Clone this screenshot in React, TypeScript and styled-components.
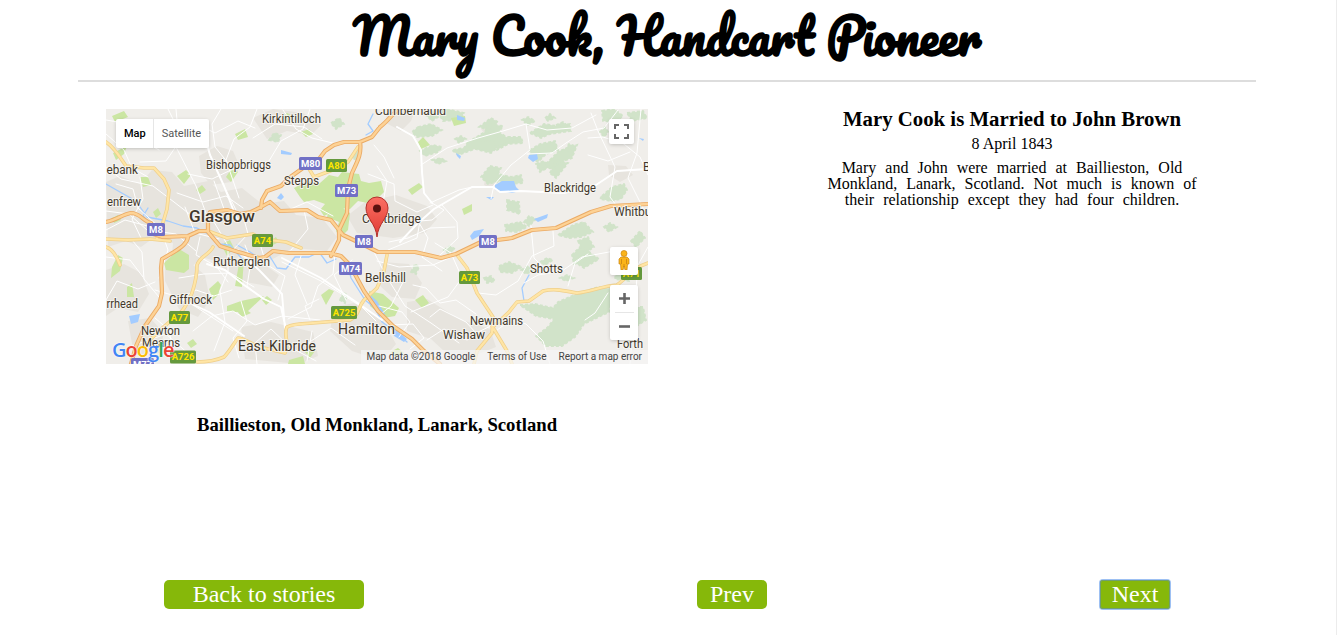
import React from "react";
import styled, { createGlobalStyle } from "styled-components";

const GlobalStyle = createGlobalStyle`
  *, *::before, *::after { box-sizing: border-box; }
  html, body { margin: 0; padding: 0; background: #fff; }
  body { font-family: "Liberation Serif", "Times New Roman", serif; color: #000; overflow: hidden; }
  h1, h2, h3, p { margin: 0; }
`;

const Page = styled.div`
  height: 635px;
  padding: 0 80px 0 78px;
  border-right: 1px solid #ececec;
  display: flex;
  flex-direction: column;
`;

const Header = styled.header`
  height: 82px;
  border-bottom: 2px solid #ddd;
  display: flex;
  justify-content: center;
  padding-top: 3px;
`;

const Title = styled.h1`
  font: 700 48px/66px Pacifico, cursive;
  white-space: nowrap;
`;

const Story = styled.main`
  display: flex;
  justify-content: space-between;
  height: 498px;
  padding: 27px 50px 0 28px;
`;

const Place = styled.section`
  width: 542px;
`;

const Details = styled.section`
  width: 388px;
  text-align: center;
`;

const EventTitle = styled.h2`
  font-size: 20.8px;
  line-height: 24px;
  margin-top: -2px;
  white-space: nowrap;
`;

const EventDate = styled.p`
  font-size: 16px;
  line-height: 18px;
  margin-top: 4px;
`;

const Description = styled.p`
  font-size: 16px;
  line-height: 16px;
  margin-top: 7px;
  word-spacing: 5px;
`;

const PlaceName = styled.h3`
  font-size: 18.72px;
  line-height: 20px;
  margin-top: 51px;
  text-align: center;
  white-space: nowrap;
`;

const Nav = styled.nav`
  display: flex;
  justify-content: space-between;
  padding: 0 86px;
`;

const NavButton = styled.button<{ $wide?: boolean; $active?: boolean }>`
  width: ${(p) => (p.$wide ? 200 : 70)}px;
  height: 29px;
  padding: 0 0 1px;
  border: 0;
  border-radius: ${(p) => (p.$active ? 3 : 5)}px;
  background: #86b80a;
  color: #fff;
  font: 24px/28px "Liberation Serif", "Times New Roman", serif;
  display: flex;
  align-items: center;
  justify-content: center;
  box-shadow: ${(p) => (p.$active ? "inset 0 0 0 1px #6f9f72, 0 0 0 1px #9dc0f3" : "none")};
`;

const MapFrame = styled.div`
  position: relative;
  width: 542px;
  height: 255px;
  overflow: hidden;
  background: #f0eeea;
  font-family: Roboto, sans-serif;
`;

const MapCanvas = styled.svg`
  display: block;
  font-family: Roboto, sans-serif;
`;

const Control = styled.div`
  position: absolute;
  background: #fff;
  border-radius: 2px;
  box-shadow: 0 1px 4px -1px rgba(0, 0, 0, 0.3);
  display: flex;
  align-items: center;
  justify-content: center;
`;

const TypeControl = styled(Control)`
  left: 10px;
  top: 10px;
  height: 29px;
`;

const TypeOption = styled.span<{ $on?: boolean }>`
  font-size: 11px;
  line-height: 29px;
  padding: 0 ${(p) => (p.$on ? 7 : 8)}px 0 8px;
  color: ${(p) => (p.$on ? "#000" : "#565656")};
  font-weight: ${(p) => (p.$on ? 500 : 400)};
  & + & { border-left: 1px solid #e6e6e6; }
`;

const FullScreen = styled(Control)`
  left: 503px;
  top: 10px;
  width: 25px;
  height: 25px;
`;

const Pegman = styled(Control)`
  left: 504px;
  top: 138px;
  width: 28px;
  height: 28px;
  padding-bottom: 2px;
`;

const Zoom = styled(Control)`
  left: 504px;
  top: 176px;
  width: 28px;
  height: 55px;
  flex-direction: column;
`;

const ZoomStep = styled.div`
  width: 19px;
  flex: 1;
  display: flex;
  align-items: center;
  justify-content: center;
  & + & { border-top: 1px solid #e6e6e6; }
`;

const Attribution = styled.div`
  position: absolute;
  right: 0;
  bottom: 0;
  height: 14px;
  padding: 0 6px 0 5px;
  display: flex;
  gap: 12px;
  font-size: 10px;
  line-height: 14px;
  color: #444;
  white-space: nowrap;
  background: rgba(245, 245, 245, 0.72);
`;

const Logo = styled.div`
  position: absolute;
  left: 6px;
  bottom: 2px;
  font: 600 20px/24px "Open Sans", sans-serif;
  letter-spacing: -0.95px;
  text-shadow: 0 0 1px #fff, 0 0 2px #fff;
`;

const Tint = styled.span<{ $c: string }>`
  color: ${(p) => p.$c};
`;

const urban = [
  "M106 182l14-6 20 8 12-14 20 2 12 14 24-5 13 11 21-4 20 16 22-3 12 14 26 3 15 19-10 14-34-3-22 12-25-9-18 14-26-8-17 16-14-8 2-22-21-4-11 8-15-6-18 6z",
  "M253 118l20-9 30 4 18 12-10 10-24-4-20 8z",
  "M199 156l18-10 16 5 7 16-9 15-20 3-10-12z",
  "M106 270l18-6 17 9 8 21-11 18-20-4-12 8z",
  "M165 257l22 3 18 15 5 25-12 17-19-8-14-28z",
  "M347 216l18-14 31-7 31 11 10 13-12 14-32 5-36-5z",
  "M382 262l27 2 13 19-7 16-23-2-16-15z",
  "M334 307l20-4 29 18 13 23-14 17-30-10-22-20z",
  "M241 327l30-5 42 10 5 24-19 8-54-5z",
  "M407 302l20-3 32 20 31 10 6 18-20 8-31-3-14-13-24-8z",
  "M387 109l29 0-5 12-10 10-15-8z",
  "M481 129l9-4 9 3 1 9-11 3z",
  "M608 165l18 1 7 9-13 7-11-7z",
  "M485 179l8-2 3 6-6 5-6-3z",
  "M128 321l22-3 14 15-5 20-25 2z",
  "M214 249l25 11 22 2 18 13-7 12-26-5-31-19z",
];

const woods = [
  "M418 127l13-3 11 6-10 6-15 1-5-5z",
  "M437 111l10-2 17 4-4 7-17 1z",
  "M468 142l17-10 3-8 15 2-4 6 13 9-11 3-10 9-16-4-17 6-6-5 12-2z",
  "M479 127l12-9 7 4-9 8z",
  "M530 150l10-6 15-3 3 9-12 4-8 8-7-4z",
  "M550 160l9-9 18-6-5 13-14 5-4 6-12-2z",
  "M530 133l14-9 13 2 13-2 1 7-21 3-9 4z",
  "M550 173l6-13 12 3-12 15z",
  "M602 196l10-9 12-3 3 6-6 9-10 2-11-2z",
  "M507 200l12 2 1 12-13-4z",
  "M490 166l11 2-3 6 13 3 10-2 2 8-14 1-8-3-13 3-7-7z",
  "M488 133l8-2 2 7-9 4-9-2z",
  "M520 305l15-1 18 4 5-6 16-7 24-8 15 2-4 23-25 12-9 13-13 9-16 0-10-10 12-9 6-8-18-3z",
  "M578 241l10-4 6 10-6 4 11 8-15 9-9-6 9-8z",
  "M572 255l8-8 8 3-3 11-11 3z",
  "M616 271l11-4 9 4-7 4 0 6-14-2z",
  "M505 225l15-3 7 5-10 5-11-1z",
  "M558 235l15-10 11-3 9 10-12 5-12 1z",
  "M499 266l10-4 13 5-10 6-12-1z",
  "M625 307l18 0 3 13-17 11-8-7z",
  "M631 241l9-10 5 7-9 9z",
  "M427 116l7-5 4 6-6 4z",
  "M420 151l13-6 9 2-4 5-13 4z",
  "M494 143l14-6 13 0 2 6-15 1-11 6z",
  "M602 111l12-2 9 7-8 6-12-1z",
  "M627 113l16-2 4 7-15 3z",
  "M524 222l5-6 7 3-7 7z",
  "M536 164l8-3 5 6-9 5z",
];

const scrub = "M432 160l9-2 5 3-8 3zM455 139l6-3 5 3-7 4zM556 125l7-3 5 4-9 3zM545 118l5-4 5 4-7 3zM565 150l4-6 6 2-4 5zM521 270l7-4 6 4-8 4zM484 278l7-2 4 5-8 2zM604 227l6-4 7 4-8 5zM614 255l5-5 5 5-6 4zM540 262l7-4 6 2-8 5zM560 278l7-3 7 3-8 3zM411 272l4-8 4 3-3 7zM444 250l6-4 5 3-7 4zM600 132l5-5 3 5-4 5zM522 120l6-3 7 4-7 4zM590 308l9-3 8 4-9 6zM340 300l3-8 4 3-2 8zM269 140l5-7 7 2-3 7zM331 123l8-5 5 6-8 5zM352 158l3-9 5 2-3 9z";

const parks = [
  "M294 188l13-7 13 2 9-8 9 2 4-5 17 2 2 7 8 2 12-2 3 11-12 12-14-3-8 8-10-1-16 8-4-6 5-6-11-4-10 2-4-5z",
  "M329 210l12-3 9 6-2 17-8 8-4-7 3-9-12-5z",
  "M164 263l15-14 10 6 0 14-5 4-18-3z",
  "M227 306l14-5 23-5-16 15-13 1-8-1z",
  "M209 289l9-8 3 4-3 10-5 5z",
  "M369 291l14 3 16 14-4 8-11 2-14-12z",
  "M418 142l5-5 7 8-9 4z",
  "M408 190l11-7 4 4-11 8z",
  "M462 209l10-5 0 7-8 4z",
  "M451 118l14-2 1 7-12 3z",
  "M177 176l9-6 5 5-7 9z",
  "M235 134l10-5 3 8-10 3z",
  "M112 267l6-12 5 3-3 13-9 7z",
  "M224 243l6-3 4 8-7 8-4-8z",
  "M240 258l4 0-2 29-7-1z",
  "M289 360l14-4 2 8-17 0z",
  "M127 287l5-4 2 14-7 0z",
  "M415 300l8-5 6 8-7 5z",
  "M112 116l12-5 4 6-13 5z",
  "M140 177l8 0 3 8-8 2z",
  "M226 177l6-9 6 4-7 10z",
  "M305 352l5-8 5 7-5 7z",
  "M113 153l14-7-3 8-8 6z",
  "M321 295l8-6 5 2-8 14z",
  "M196 190l6-5 4 5-6 4zM155 137l5-4 5 4-6 5zM270 241l6-4 3 5-6 3zM153 212l5-4 3 6-5 4zM112 218l6-3 3 5-7 3zM262 300l5-4 5 4-6 5zM187 343l6-4 4 5-6 4zM390 352l8-4 6 5-8 4zM281 118l6-5 6 3-5 6zM237 311l8-2 6 4-9 4zM301 132l8-3 4 5-7 3z",
];

const lakes = [
  "M495 185l7-4 12 0 2 6 4 4-8 2-17-3z",
  "M529 155l8-1 1 5-5 3-5-4z",
  "M470 236l4-5 10-2-5 7-7 4z",
  "M457 115l8 3-1 3-7-1z",
  "M534 219l14-5-1 4-9 4z",
  "M370 295l7 6 8 13-6 2-10-14z",
  "M281 150l11 3-1 2-10-1z",
  "M277 198l4-5 3 4-3 3z",
  "M129 316l11-2-2 8-7 2z",
  "M486 197l8 0-3 3z",
  "M456 153l5 3-1 3-3-3z",
  "M639 138l5 1-1 2z",
  "M392 327l7 5 8 7-3 3-10-6z",
  "M352 307l4 0-1 3z",
];

const rivers = [
  "M106 184l14 8 16 9 11 16 21 4 15 5 14 2 13 7 10 9 10 1 13 15",
  "M237 245l13 7 12 8 7-5 8 13 9 1 9-12 14 0 10-5 8 11 9-4",
  "M347 262l4 16 14 22 10 8 7 14 13 9 12 11",
  "M373 114l-5 10 5 7-7 4",
  "M524 301l-2-13 7-13",
  "M148 208l-5 8 10 10",
];

const streets = [
  "M168 109l9 18-2 18 21 41 11 30M106 167l15 12 32 7 21 16 22 17M205 137l5 18 14 31 12 24",
  "M106 120l18 3 14 15 21 12M257 109l-7 18-16 12-8 21 13 38M253 138l22-14 29 3 18 12",
  "M283 110l13 19 16 9 29 7M255 128l-17-7-23 12-14-7-29 16-36-5",
  "M116 184l17 5 5 19 20 18M140 177l3 22-11 20 9 19M177 193l26 9 23-6 17 12",
  "M188 174l24 5 19-9 25-6M214 181l10 28-10 13 13 22",
  "M106 211l23 3 18 16 29 4 20 17M106 230l19-10 30 8M185 207l10 26 24 6",
  "M132 240l10 12 2 27 15 18M106 300l11-19 21 8 17-7M155 290l27 8 25 16 26 17",
  "M207 264l18 6 19 15 20 14 17 8 5 22M228 249l0 22-8 20 5 31-11 29",
  "M179 278l25-4 26-1 24 14M245 245l6 16-4 25 16 13M282 262l39 19 41 26 14 14",
  "M336 243l-3 31-15 12-7 21-23 12M301 256l-6 19 12 29M352 260l-18 15 12 25",
  "M193 331l19-15 21-5 22 14 27-9 38 4M129 347l37-13 25 22M155 318l15 13 2 33",
  "M257 364l-2-21 16-14 19 18 26 14M312 331l-5 30M305 345l26-17 24 17",
  "M397 127l16 9 8 14 1 22 2 21 8 10 12 7-12 10-12 1-3 17-29 12",
  "M430 203l29-13 13-3 21 0 7 5 20-1 44 2 32-8 21-14 30-2",
  "M421 165l26-17 31-10 25-7 23-7 21 6 25-2 24-13M526 124l4 26-19 15-17 20-3 14",
  "M527 154l25-1 14-10 17-11 21-4 14-18M591 113l7 18 17 36-5 30 15 20",
  "M641 109l-4 44-9 25 17 34M588 138l15-1 21 7 16 13 8 18M630 152l-22 9-20-6",
  "M368 174l26 10 1 17 22 11 16-7M367 210l16-7 4-22-10-15M374 145l10 12 10 21",
  "M389 242l19-4 22-10 25-1M415 216l13 22-6 19 20 14M442 205l15 17 1 16-20 19",
  "M374 252l12 24 19 30 26 17 28 20M379 306l23 6 8 10-11 15M405 278l-14 28-10 8",
  "M456 255l-23 10-34 2-22-6M435 243l16 10 11 25-14 19-37 15",
  "M478 293l18 2 22-14 14-25 22-10-1-15M476 314l-20-14-16 3-14-15-13-3",
  "M430 317l10-8 26 13 10 11 17-8M391 325l22-1 11 14-14 11M427 340l17-11 23 11",
  "M648 247l-10 18-8 99M585 320l10-7 13-20M524 283l14-8 24-4 20-14 38-7",
  "M550 364l-7-23-17-17-15-4-18 13M568 286l7-23 13-9M531 226l3 32 14 14",
  "M310 109l-7 20-22 12-12 20-17 7M304 210l4 19-17 21M242 212l6 22-16 17M286 211l21-9 26 14",
  "M176 109l3 33-13 19-26 1M106 134l18 16 8 18 16 9M221 109l-9 15 3 23 14 17M151 138l26 9 27-7",
  "M161 230l7 20-9 28M106 257l24 3 13 17M200 237l-4 18 20 11 12 16M258 237l8 27 19 12-7 24",
  "M182 298l14-8 18 6 18-6M239 358l-6-20 14-17-6-20M310 320l-5-14 14-7",
];

const mainStreets = "M397 127l16 9 8 14 1 22 2 21 8 10M400 242l17-18 17-15 38-22 21 0 7 5 20-1 44 2 32-8 21-14 30-2M207 264l18 6 19 15 20 14 17 8 5 22M238 250l22 21 22 23 3 35M282 258l39 20 41 28 20 14M179 298l30 14 35 24M205 137l5 18 14 31 14 36";

const aRoads = [
  "M106 142c8 5 14 15 20 24l18 2 10 0 10 11 5 11-2 19-5 17-5 13",
  "M106 239l22 1 22-1 20 2",
  "M106 247c7 2 11 10 14 18",
  "M213 247c-4 8-13 9-16 18 0 11-2 19-5 28-4 8-6 15-12 20l-20 17-17 17",
  "M358 147l-10 15-10 6-24 9-6-10",
  "M208 231l19 7 26-4 8 5 25 3 15 6",
  "M197 362c12 0 18-1 27-5 6-6 10-14 14-19 7 0 14 7 22 9l25 6c5-10-2-19 2-26 8-4 17-3 26-4l37-3c9-4 8-13 14-20l13-12 7-17 3-16",
  "M457 255l10 13 10 25 16 24-1 16-15 18-3 13M492 326l15 25 5 13",
  "M493 327l16-15 8-10 12-1 14-10c12-3 22 0 34 2 13-1 25-7 40-8 10-7 15-17 31-22",
];

const motorways = [
  "M380 127c8-6 14-15 19-18M380 127l-8 10-12 5-16 0-10 3-9 6-9 12-13 5-14 10-8 8-14 5-5 9-1 8",
  "M106 222c11-2 17-8 25-9 9 0 12 8 20 10M150 233l13 4 25-1 11-5 9 0 0-13 2-6 17-2 13 4 11-2 10-5 9-5 10 9 27-1 11 7 13 3 12 15 17 8 18 9 37 0 26 6 15-4 25-12 31-4 20-8 24-2 35-16 20-6 37-2",
  "M360 142c2 12-3 20-8 31l-4 16-1 24-8 17 0 10-8 16",
  "M208 232l12 14 15 5 24 7 6-1 8-6 16 2 40 0 12 3 9 9 14 26 14 20 15 15 19 13 12 12 16 13",
  "M188 237c-1 7-8 11-14 15l-12 7-1 9 1 25-3 13-14 20-9 20-5 18",
];

interface Label { t: string; x: number; y: number; s: number; w?: number; }
const labels: Label[] = [
  { t: "Kirkintilloch", x: 262, y: 123, s: 12, w: 59 },
  { t: "Cumbernauld", x: 375, y: 115, s: 12, w: 71 },
  { t: "Bishopbriggs", x: 206, y: 169, s: 12, w: 65 },
  { t: "Stepps", x: 284, y: 184.5, s: 12, w: 35 },
  { t: "ebank", x: 106.5, y: 174, s: 12, w: 31.5 },
  { t: "enfrew", x: 107, y: 206, s: 12, w: 34 },
  { t: "Glasgow", x: 189, y: 222, s: 17, w: 66 },
  { t: "Coatbridge", x: 362, y: 223, s: 12, w: 59 },
  { t: "Blackridge", x: 544, y: 192, s: 12, w: 52 },
  { t: "Whitburn", x: 614, y: 216, s: 12 },
  { t: "B", x: 643, y: 171, s: 12 },
  { t: "Rutherglen", x: 213, y: 266, s: 12, w: 57 },
  { t: "Giffnock", x: 169, y: 304, s: 12, w: 43 },
  { t: "rrhead", x: 106.5, y: 308, s: 12, w: 31.5 },
  { t: "Newton", x: 141, y: 335, s: 12, w: 39 },
  { t: "Mearns", x: 142, y: 347, s: 12, w: 38 },
  { t: "East Kilbride", x: 238, y: 351, s: 14, w: 78 },
  { t: "Hamilton", x: 338, y: 334, s: 14, w: 57 },
  { t: "Bellshill", x: 365, y: 282, s: 12, w: 41 },
  { t: "Shotts", x: 530, y: 273, s: 12, w: 33 },
  { t: "Newmains", x: 470, y: 324.5, s: 12, w: 53 },
  { t: "Wishaw", x: 443, y: 338.5, s: 12, w: 42 },
  { t: "Forth", x: 617, y: 348, s: 12, w: 26 },
];

const shields: [string, number, number, number][] = [
  ["M80", 299, 157, 23], ["A80", 326, 159, 21], ["M73", 335, 184, 23],
  ["M8", 147, 223, 18], ["A74", 252, 234, 21], ["M8", 355, 235, 18],
  ["M8", 479, 235, 18], ["M74", 339, 262, 23], ["A73", 459, 271, 21],
  ["A77", 169, 311, 21], ["A725", 331, 306, 26], ["A726", 170, 350.5, 26],
  ["M77", 131, 358, 23], ["A71", 621, 267, 21],
];

const lineProps = { fill: "none", strokeLinejoin: "round" as const, strokeLinecap: "round" as const };

const RoadMap = () => (
  <MapCanvas width="542" height="255" viewBox="106 109 542 255">
    <path d={urban.join("")} fill="#e7e4de" />
    <path d={woods.join("") + scrub} fill="#d1e3c9" stroke="#d1e3c9" strokeWidth="1.8" strokeDasharray="3 2" />
    <path d={parks.join("")} fill="#cbe6a3" />
    <path d={lakes.join("")} fill="#a3ccff" />
    <path d={rivers.join("")} {...lineProps} stroke="#a3ccff" strokeWidth="1.3" />
    <path d={streets.join("")} {...lineProps} stroke="#fff" strokeWidth="1" />
    <path d={mainStreets} {...lineProps} stroke="#fff" strokeWidth="1.9" />
    <path d={aRoads.join("")} {...lineProps} stroke="#efcf8b" strokeWidth="3.6" />
    <path d={aRoads.join("")} {...lineProps} stroke="#ffe5a5" strokeWidth="2.2" />
    <path d={motorways.join("")} {...lineProps} stroke="#eaaa65" strokeWidth="4.2" />
    <path d={motorways.join("")} {...lineProps} stroke="#fdd295" strokeWidth="2.4" />
    {shields.map(([name, x, y, w]) => {
      const m = name[0] === "M";
      return (
        <g key={name + x}>
          <rect x={x} y={y} width={w} height="13" rx="1.5" fill={m ? "#7170c5" : "#65993d"} />
          <text x={x + w / 2} y={y + 9.8} textAnchor="middle" fontSize="9.5" fontWeight="700" fill={m ? "#fff" : "#ffe600"}>{name}</text>
        </g>
      );
    })}
    {labels.map((l) => (
      <text key={l.t} x={l.x} y={l.y} fontSize={l.s} textLength={l.w} lengthAdjust="spacingAndGlyphs"
        fontWeight={l.s > 16 ? 500 : 400} fill="#42382b" stroke="#f7f6f3" strokeWidth="2" strokeOpacity="0.85" paintOrder="stroke">{l.t}</text>
    ))}
    <defs>
      <linearGradient id="pin" x1="0" y1="0" x2="0" y2="1">
        <stop offset="0" stopColor="#fb7064" />
        <stop offset="1" stopColor="#e03a32" />
      </linearGradient>
    </defs>
    <path d="M377 237C376 224 366 218 366 208a11 11 0 0 1 22 0c0 10-10 16-11 29z" fill="url(#pin)" stroke="#b3312c" strokeWidth="1" />
    <circle cx="377" cy="208.5" r="4" fill="#5c120f" />
  </MapCanvas>
);

const googleLetters: [string, string][] = [
  ["G", "#4285f4"], ["o", "#ea4335"], ["o", "#fbbc05"], ["g", "#4285f4"], ["l", "#34a853"], ["e", "#ea4335"],
];

const App = () => (
  <>
    <GlobalStyle />
    <Page>
      <Header><Title>Mary Cook, Handcart Pioneer</Title></Header>
      <Story>
        <Place>
          <MapFrame>
            <RoadMap />
            <TypeControl>
              <TypeOption $on>Map</TypeOption>
              <TypeOption>Satellite</TypeOption>
            </TypeControl>
            <FullScreen>
              <svg width="15" height="15" viewBox="0 0 15 15" fill="none" stroke="#666" strokeWidth="2">
                <path d="M1 5V1h4M10 1h4v4M14 10v4h-4M5 14H1v-4" />
              </svg>
            </FullScreen>
            <Pegman>
              <svg width="12" height="20" viewBox="0 0 12 20">
                <path d="M3 7h6l2 2v5H9.500l-.5 6H7l-1-4-1 4H3l-.5-6H1V9z" fill="#fbb41a" stroke="#c98413" strokeWidth=".7" />
                <path d="M3.500 9v5M8.500 9v5M6 14v3" stroke="#c17d12" strokeWidth=".7" />
                <circle cx="6" cy="3.500" r="3" fill="#fbb41a" stroke="#c98413" strokeWidth=".7" />
              </svg>
            </Pegman>
            <Zoom>
              <ZoomStep>
                <svg width="11" height="11" viewBox="0 0 11 11"><path d="M0 5.500h11M5.500 0v11" stroke="#666" strokeWidth="2.600" /></svg>
              </ZoomStep>
              <ZoomStep>
                <svg width="11" height="11" viewBox="0 0 11 11"><path d="M0 5.500h11" stroke="#666" strokeWidth="2.600" /></svg>
              </ZoomStep>
            </Zoom>
            <Logo>{googleLetters.map(([c, color], i) => <Tint key={i} $c={color}>{c}</Tint>)}</Logo>
            <Attribution>
              <span>Map data ©2018 Google</span>
              <span>Terms of Use</span>
              <span>Report a map error</span>
            </Attribution>
          </MapFrame>
          <PlaceName>Baillieston, Old Monkland, Lanark, Scotland</PlaceName>
        </Place>
        <Details>
          <EventTitle>Mary Cook is Married to John Brown</EventTitle>
          <EventDate>8 April 1843</EventDate>
          <Description>
            Mary and John were married at Baillieston, Old Monkland, Lanark, Scotland. Not much is known of their
            relationship except they had four children.
          </Description>
        </Details>
      </Story>
      <Nav>
        <NavButton $wide>Back to stories</NavButton>
        <NavButton>Prev</NavButton>
        <NavButton $active>Next</NavButton>
      </Nav>
    </Page>
  </>
);

export default App;
